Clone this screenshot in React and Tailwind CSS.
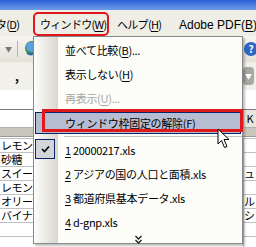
import React from "react";

const F = { fontFamily: '"Noto Sans CJK JP", "Liberation Sans", sans-serif' };

function U({ children }) {
  return <span className="underline underline-offset-2">{children}</span>;
}

function Item({ children, gray }) {
  return (
    <div className={`flex h-[24px] items-center whitespace-nowrap pl-[31px] ${gray ? "text-[#a8a79f]" : "text-black"}`}>
      {children}
    </div>
  );
}

export default function App() {
  const rowsL = ["レモンシ", "砂糖", "スイート", "レモンシ", "オリーブ", "バイナッ", "", ""];
  const rowsR = ["", "", "ュー", "", "ル", "シ", "", ""];
  return (
    <div className="relative h-[247px] w-[256px] overflow-hidden bg-white text-[11px] leading-none" style={F}>
      {/* title bar */}
      <div className="h-[10px] bg-gradient-to-b from-[#2a5ed6] to-[#6f9be8]" />
      {/* menu bar */}
      <div className="flex h-[26px] items-center whitespace-nowrap bg-[#efeee6] pt-[3px] tracking-[-0.7px] text-black">
        <span className="ml-[-4px] w-[44px] shrink-0">タ(<U>D</U>)</span>
        <span className="w-[77px] shrink-0">ウィンドウ(<U>W</U>)</span>
        <span className="w-[62px] shrink-0">ヘルプ(<U>H</U>)</span>
        <span className="shrink-0 tracking-[0px]" style={{ fontFamily: '"Liberation Sans", sans-serif', fontSize: "12px" }}>Adobe PDF(<U>B</U>)</span>
      </div>
      {/* toolbar */}
      <div className="flex h-[26px] items-center bg-gradient-to-b from-[#f6f5f0] to-[#e4e2d8]">
        <span className="ml-[5px] text-[7px] text-[#777]">▼</span>
        <div className="ml-[5px] h-[16px] w-px bg-[#b8b6ab]" />
        <svg width="12" height="16" viewBox="0 0 12 16" className="ml-[6px]">
          <circle cx="8" cy="7" r="7" fill="#3b8a4a" />
          <circle cx="7" cy="6" r="5" fill="#5ba0e0" />
          <path d="M3 12 q4 3 8 0" stroke="#2a6ab0" strokeWidth="2" fill="none" />
        </svg>
        <div className="ml-auto mr-[-2px] flex h-[14px] w-[14px] items-center justify-center rounded-full bg-[#2c64c8] text-[10px] font-bold text-white">?</div>
      </div>
      {/* formula / second toolbar */}
      <div className="flex h-[28px] items-center bg-[#f1f0ea]">
        <span className="ml-[15px] text-[12px] font-bold">,</span>
        <div className="ml-auto mr-[2px] flex h-[18px] w-[11px] items-center justify-center rounded-sm bg-[#a8a7a0] text-[7px] text-white">▼</div>
      </div>
      {/* sheet */}
      <div className="flex h-[20px] border-b border-[#7c7c7c] bg-white" />
      <div className="flex h-[18px] border-b border-[#b0b0b0] bg-white">
        <div className="w-[33px]" />
        <div className="ml-auto flex w-[13px] items-center justify-center border-l border-[#b0b0b0] bg-[#e8e6dc] text-[11px]">K</div>
      </div>
      <div className="h-[9px] border-b border-[#9a9a9a] bg-[#c9c7bc]" />
      <div className="h-[2px] border-b border-[#c0c0c0] bg-white" />
      {rowsL.map((t, i) => (
        <div key={i} className="flex h-[14px] border-b border-[#c0c0c0]">
          <div className="w-[33px] overflow-hidden whitespace-nowrap pl-[1px] text-[11px] leading-[13px] tracking-[-0.5px]">{t}</div>
          <div className="ml-auto w-[13px] overflow-hidden whitespace-nowrap border-l border-[#c0c0c0] text-[11px] leading-[13px]">{rowsR[i]}</div>
        </div>
      ))}

      {/* ウィンドウ annotation */}
      <div className="absolute left-[33px] top-[12px] h-[24px] w-[76px] rounded-[5px] border-2 border-[#e0181c]" />

      {/* dropdown menu */}
      <div className="absolute left-[33px] top-[36px] flex h-[208px] w-[210px] flex-col border border-[#8a8a8a] bg-[#fcfcf9] tracking-[-0.3px] shadow-[2px_2px_2px_rgba(0,0,0,0.25)]">
        <div className="absolute bottom-0 left-0 top-0 w-[24px] bg-gradient-to-r from-[#fdfdfb] to-[#d8d6cc]" />
        <div className="relative flex flex-col pt-[1px]">
          <Item>並べて比較(<U>B</U>)...</Item>
          <Item>表示しない(<U>H</U>)</Item>
          <Item gray>再表示(<U>U</U>)...</Item>
          <div className="mx-[1px] mt-[2px] flex h-[22px] items-center whitespace-nowrap border border-[#0a246a] bg-[#b6bdd2] pl-[29px]">
            ウィンドウ枠固定の解除(<U>F</U>)
          </div>
          <div className="ml-[30px] mt-[2px] h-px bg-[#c5c2b8]" />
          <div className="relative mt-[1px] flex h-[24px] items-center whitespace-nowrap pl-[31px]">
            <div className="absolute left-[1px] top-[1px] flex h-[20px] w-[20px] items-center justify-center border border-[#0a246a] bg-[#d4d5d8]">
              <svg width="9" height="8" viewBox="0 0 9 8">
                <path d="M1 4 L3.5 6.5 L8 1.5" stroke="#000" strokeWidth="1.6" fill="none" />
              </svg>
            </div>
            <U>1</U>&nbsp;20000217.xls
          </div>
          <Item><U>2</U>&nbsp;アジアの国の人口と面積.xls</Item>
          <Item><U>3</U>&nbsp;都道府県基本データ.xls</Item>
          <Item><U>4</U>&nbsp;d-gnp.xls</Item>
          <div className="flex h-[14px] items-start justify-center pt-[1px]">
            <svg width="9" height="10" viewBox="0 0 9 10">
              <path d="M1.5 1 L4.5 4 L7.5 1 M1.5 5 L4.5 8 L7.5 5" stroke="#222" strokeWidth="1.4" fill="none" />
            </svg>
          </div>
        </div>
      </div>

      {/* highlighted item annotation */}
      <div className="absolute left-[42px] top-[109px] h-[23px] w-[201px] border-[3px] border-[#e0181c]" />

      {/* cursor */}
      <svg className="absolute left-[217px] top-[128px]" width="14" height="22" viewBox="0 0 14 22">
        <path d="M1 1 L1 16 L4.5 12.5 L7.5 19.5 L10 18.5 L7 11.5 L12 11.5 Z" fill="#fff" stroke="#000" strokeWidth="1" />
      </svg>
    </div>
  );
}
